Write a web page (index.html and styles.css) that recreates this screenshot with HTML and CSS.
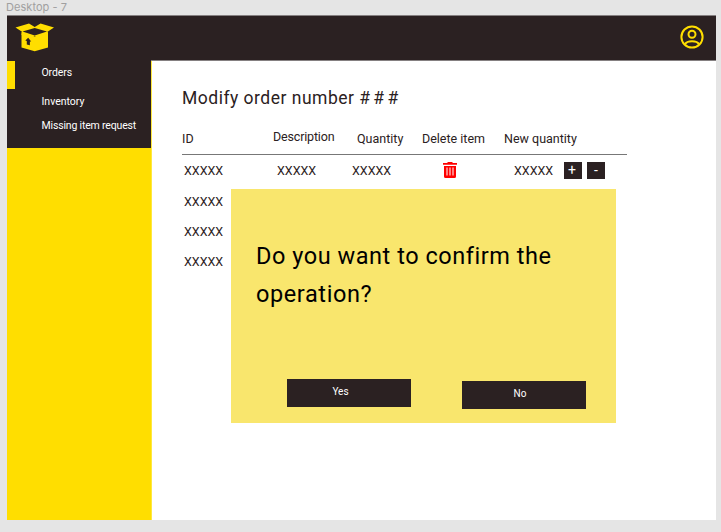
FILE: index.html
```html
<!DOCTYPE html>
<html lang="en">
<head>
<meta charset="utf-8">
<title>Modify order</title>
<link rel="stylesheet" href="styles.css">
</head>
<body>
<div class="frame-label">Desktop - 7</div>
<div class="frame">
  <header class="topbar">
    <svg class="logo" viewBox="0 0 40 29" width="40" height="29">
      <path fill="#ffde00" d="M6.500 9 19.700 13.500 33 9V24.400L19.700 28.200 6.500 24.400Z"/>
      <path fill="#ffde00" d="M.5 4.500 14 .5 19.700 4 25.500 .5 39 4.500 32.500 8.800 33 12 24 15 19.700 12.800 15.500 15 6.500 12 7 8.800Z"/>
      <path fill="#2b2122" d="M7.500 8.500 19.700 4.900 32 8.500 19.700 12.400ZM13.200 14.800 16.200 18.600 14.900 18.400V22.200L11.800 21.400V17.900L10.300 17.500Z"/>
    </svg>
    <svg class="user" viewBox="0 0 24 24" width="24" height="24" fill="none" stroke="#ffde00" stroke-width="2">
      <circle cx="12" cy="12" r="10.600"/>
      <circle cx="12" cy="9.200" r="3.500"/>
      <path d="M5 19.200C7 15.200 17 15.200 19 19.200"/>
    </svg>
  </header>
  <div class="body">
    <aside class="sidebar">
      <nav class="menu">
        <a class="item orders">Orders</a>
        <a class="item inventory">Inventory</a>
        <a class="item missing">Missing item request</a>
      </nav>
    </aside>
    <main class="content">
      <h1>Modify order number <span class="hashes">###</span></h1>
      <div class="row head">
        <span class="h-id">ID</span><span class="h-desc">Description</span><span class="h-qty">Quantity</span><span class="h-del">Delete item</span><span class="h-new">New quantity</span>
      </div>
      <div class="row first">
        <span class="x">XXXXX</span><span class="x desc">XXXXX</span><span class="x qty">XXXXX</span>
        <span class="trash"><svg viewBox="0 0 14 16" width="14" height="16"><path fill="#f00" fill-rule="evenodd" d="M4.500 0H9.500V1H14V2.800H0V1H4.500ZM1 4H13V14.500Q13 16 11.500 16H2.500Q1 16 1 14.500ZM3.500 5.500V13.500H4.500V5.500ZM6.500 5.500V13.500H7.500V5.500ZM9.500 5.500V13.500H10.500V5.500Z"/></svg></span>
        <span class="amount"><span class="x">XXXXX</span><button class="step plus">+</button><button class="step minus">-</button></span>
      </div>
      <div class="row rest"><span class="x">XXXXX</span></div>
      <div class="row rest"><span class="x">XXXXX</span></div>
      <div class="row rest"><span class="x">XXXXX</span></div>
    </main>
  </div>
</div>
<section class="dialog">
  <p><span class="line-one">Do you want to confirm the</span><br><span class="line-two">operation?</span></p>
  <div class="actions"><button class="yes">Yes</button><button class="no">No</button></div>
</section>
</body>
</html>
```
FILE: styles.css
```css
* { box-sizing: border-box; }
body {
  margin: 0;
  width: 721px;
  height: 532px;
  overflow: hidden;
  background: #e5e5e5;
  color: #2b2122;
  font-family: Roboto, "Liberation Sans", sans-serif;
  font-weight: 400;
}
button { border: 0; padding: 0; font: inherit; color: #fff; background: #2b2122; }
.frame-label { height: 15px; padding-left: 6px; font: 11px/14px Inter, sans-serif; letter-spacing: .05px; color: #a0a0a0; }
.frame { width: 709px; height: 505px; margin-left: 7px; background: #fff; }
.topbar {
  display: flex;
  justify-content: space-between;
  align-items: flex-start;
  height: 46px;
  padding: 7px 12px 0 7.5px;
  border-top: 1px solid #858081;
  border-bottom: 1px solid #858081;
  background: #2b2122;
}
.user { margin-top: 1.5px; }
.body { display: flex; height: 459px; }
.sidebar { width: 145px; background: #ffde00; border-right: 1px solid #ffe840; }
.menu { display: flex; flex-direction: column; width: 144px; height: 88px; background: #2b2122; color: #fff; font-size: 10.5px; margin-top: -1px; padding-top: 1px; }
.item { height: 24px; padding-left: 34.5px; line-height: 24px; white-space: nowrap; }
.orders { height: 28px; border-left: 8px solid #ffde00; padding-left: 26.5px; letter-spacing: -.1px; }
.inventory { margin-top: 1px; }
.missing { letter-spacing: -.17px; }
.content { width: 564px; padding: 24px 0 0 30px; }
h1 { margin: 0; height: 26px; font-size: 17.5px; line-height: 26px; font-weight: 400; letter-spacing: .5px; white-space: nowrap; }
.hashes { letter-spacing: 3.3px; }
.row { display: grid; grid-template-columns: 91px 84px 65px 82px 124px; width: 445px; font-size: 12.5px; white-space: nowrap; }
.head { height: 44px; padding-top: 16.5px; line-height: 22px; border-bottom: 1px solid #777; }
.h-desc { margin-top: -2px; letter-spacing: -.17px; }
.first { height: 32px; line-height: 32px; }
.x { padding-left: 2px; }
.desc { padding-left: 4px; }
.qty { margin-left: -7px; }
.trash { padding: 7px 0 0 21px; line-height: 0; }
.amount { display: flex; padding-left: 8px; }
.amount .x { width: 43px; }
.step { width: 18px; height: 17px; margin-top: 7px; line-height: 17px; font-size: 14px; }
.plus { margin-left: 9px; padding-right: 2px; }
.minus { margin-left: 5px; }
.rest { height: 30px; line-height: 30px; }
.dialog { position: absolute; left: 231px; top: 189px; width: 385px; height: 234px; padding: 49px 0 0 25px; background: #f9e66d; color: #000; }
.dialog p { margin: 0; height: 141px; font-size: 23.5px; line-height: 37.5px; white-space: nowrap; }
.line-one { letter-spacing: .54px; }
.line-two { letter-spacing: .6px; }
.actions { display: flex; gap: 51px; padding-left: 31px; font-size: 10px; }
.actions button { width: 124px; height: 28px; line-height: 20px; padding: 0 17px 3px 0; }
.actions .no { margin-top: 2px; padding-right: 8px; }
```
